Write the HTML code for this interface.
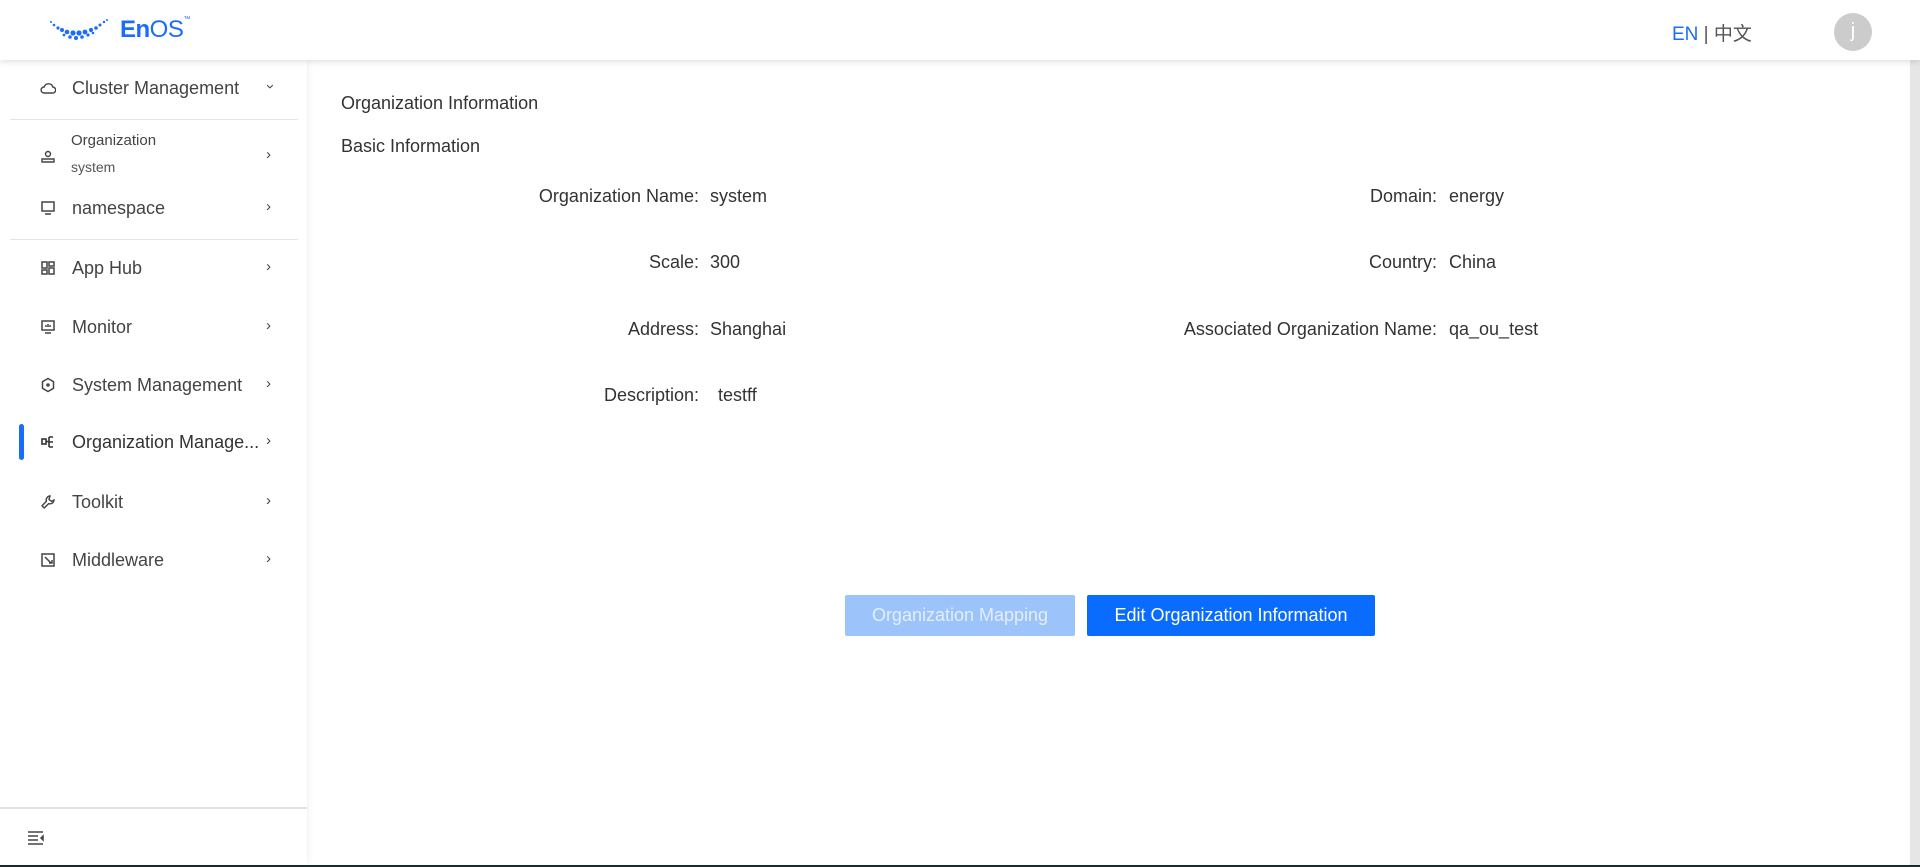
<!DOCTYPE html>
<html><head><meta charset="utf-8"><style>
*{margin:0;padding:0;box-sizing:border-box}
body{width:1920px;height:867px;overflow:hidden;background:#fff;font-family:"Liberation Sans","Noto Sans CJK SC",sans-serif;color:#333;position:relative}
.hdr{position:absolute;left:0;top:0;width:1920px;height:60px;background:#fff;box-shadow:0 2px 6px rgba(0,0,0,.12);z-index:3}
.side{position:absolute;left:0;top:60px;width:307px;height:805px;background:#fff;box-shadow:2px 0 6px rgba(0,0,0,.05);z-index:2}
.it{position:absolute;left:0;width:307px;height:40px;font-size:18px;color:#444}
.it .ic{position:absolute;left:40px;top:12px;width:16px;height:16px}
.it .tx{position:absolute;left:72px;top:10px}
.it .ch{position:absolute;left:266px;top:10px;font-size:15px;color:#444}
.div{position:absolute;left:10px;width:288px;height:1px;background:#e4e4e4}
.lbl{position:absolute;font-size:18px;line-height:24px;height:24px;color:#333;white-space:nowrap}
.c{font-family:"Liberation Sans",sans-serif;display:inline-block;width:10px}
.btn{position:absolute;top:595px;height:41px;border-radius:2px;color:#fff;font-size:18px;text-align:center;line-height:41px}
</style></head><body>
<div class="hdr">
<svg style="position:absolute;left:48px;top:18px" width="66" height="28" viewBox="0 0 66 28">
<g fill="#1a6dfa">
<circle cx="3" cy="4" r="1"/><circle cx="6" cy="7" r="1.3"/><circle cx="10" cy="10" r="1.6"/><circle cx="14" cy="12" r="2"/><circle cx="19" cy="14" r="2.3"/><circle cx="25" cy="15" r="2.6"/><circle cx="31" cy="15" r="2.6"/><circle cx="37" cy="14" r="2.4"/><circle cx="43" cy="12" r="2.1"/><circle cx="48" cy="10" r="1.8"/><circle cx="52" cy="7" r="1.5"/><circle cx="56" cy="4" r="1.2"/><circle cx="59" cy="2" r="1"/>
<circle cx="22" cy="19" r="1.8"/><circle cx="28" cy="20" r="2"/><circle cx="34" cy="19" r="1.8"/><circle cx="40" cy="17" r="1.6"/><circle cx="16" cy="17" r="1.4"/><circle cx="45" cy="15" r="1.3"/>
</g></svg>
<div style="position:absolute;left:120px;top:16px;font-size:24px;color:#1a6dfa;letter-spacing:-0.5px"><b>En</b>OS<span style="font-size:7px;vertical-align:top">™</span></div>
<div style="position:absolute;left:1672px;top:19px;font-size:19px;color:#555"><span style="color:#1a6dfa">EN</span> | 中文</div>
<div style="position:absolute;left:1834px;top:13px;width:38px;height:38px;border-radius:50%;background:#ccc;color:#fff;font-size:20px;text-align:center;line-height:36px">j</div>
</div>
<div class="side">
<div class="it" style="top:8px"><svg class="ic" viewBox="0 0 16 16" fill="none" stroke="#444" stroke-width="1.4"><path d="M4 13h8.5a3 3 0 0 0 .3-6 4.5 4.5 0 0 0-8.6 0A3 3 0 0 0 4 13z"/></svg><span class="tx">Cluster Management</span><span class="ch" style="transform:rotate(90deg);left:268px">›</span></div>
<div class="div" style="top:59px"></div>
<div class="it" style="top:72px;height:50px"><svg class="ic" style="top:17px" viewBox="0 0 16 16" fill="none" stroke="#444" stroke-width="1.4"><circle cx="8" cy="5" r="2.5"/><path d="M2 13h12v-3H2z"/></svg><span style="position:absolute;left:71px;top:0;font-size:15px">Organization</span><span style="position:absolute;left:71px;top:27px;font-size:14px;color:#555">system</span><span class="ch" style="top:14px">›</span></div>
<div class="it" style="top:128px"><svg class="ic" viewBox="0 0 16 16" fill="none" stroke="#444" stroke-width="1.5"><rect x="2" y="2" width="12" height="9"/><path d="M5 14h6"/></svg><span class="tx">namespace</span><span class="ch">›</span></div>
<div class="div" style="top:179px"></div>
<div class="it" style="top:188px"><svg class="ic" viewBox="0 0 16 16" fill="none" stroke="#444" stroke-width="1.5"><rect x="2" y="2" width="5" height="6"/><rect x="9" y="2" width="5" height="4"/><rect x="2" y="10" width="5" height="4"/><rect x="9" y="8" width="5" height="6"/></svg><span class="tx">App Hub</span><span class="ch">›</span></div>
<div class="it" style="top:247px"><svg class="ic" viewBox="0 0 16 16" fill="none" stroke="#444" stroke-width="1.5"><rect x="2" y="2" width="12" height="9"/><path d="M5 14h6M6 8V6M8 8V5M10 8V6"/></svg><span class="tx">Monitor</span><span class="ch">›</span></div>
<div class="it" style="top:305px"><svg class="ic" viewBox="0 0 16 16" fill="none" stroke="#444" stroke-width="1.5"><path d="M8 1.5l5.5 3.2v6.6L8 14.5l-5.5-3.2V4.7z"/><circle cx="8" cy="8" r="1" fill="#444"/></svg><span class="tx">System Management</span><span class="ch">›</span></div>
<div style="position:absolute;left:19px;top:364px;width:5px;height:36px;border-radius:3px;background:#1a6dfa"></div>
<div class="it" style="top:362px"><svg class="ic" viewBox="0 0 16 16" fill="none" stroke="#333" stroke-width="1.6"><rect x="2" y="5" width="4" height="5"/><path d="M6 7.5h3M9 3v10M9 3h4M9 8h4M9 13h4"/></svg><span class="tx" style="color:#333">Organization Manage...</span><span class="ch">›</span></div>
<div class="it" style="top:422px"><svg class="ic" viewBox="0 0 16 16" fill="none" stroke="#444" stroke-width="1.4"><path d="M10 2a4 4 0 0 0-3.6 5.3L2 11.8 4.2 14l4.5-4.4A4 4 0 0 0 14 6l-2.5 1.3L9 5.5 10 2z"/></svg><span class="tx">Toolkit</span><span class="ch">›</span></div>
<div class="it" style="top:480px"><svg class="ic" viewBox="0 0 16 16" fill="none" stroke="#444" stroke-width="1.5"><rect x="2" y="2" width="12" height="12"/><path d="M5 5l6 6M9 11h3v-3"/></svg><span class="tx">Middleware</span><span class="ch">›</span></div>
<div style="position:absolute;left:0;top:747px;width:307px;height:2px;background:#e2e2e6"></div>
<svg style="position:absolute;left:28px;top:771px" width="16" height="14" viewBox="0 0 16 14" stroke="#444" stroke-width="1.5"><path d="M0 1h15M0 5h10M0 9h10M0 13h15"/><path d="M15 5l-2 2 2 2z" fill="#444"/></svg>
</div>
<div style="position:absolute;left:1910px;top:60px;width:10px;height:805px;background:#e6e6e6"></div>
<div style="position:absolute;left:0;top:865px;width:1920px;height:2px;background:#1d2a2a"></div>
<div class="lbl" style="left:341px;top:91px">Organization Information</div>
<div class="lbl" style="left:341px;top:134px">Basic Information</div>
<div class="lbl" style="right:1216px;top:184px">Organization Name<span class="c">:</span></div><div class="lbl" style="left:710px;top:184px">system</div>
<div class="lbl" style="right:1216px;top:250px">Scale<span class="c">:</span></div><div class="lbl" style="left:710px;top:250px">300</div>
<div class="lbl" style="right:1216px;top:317px">Address<span class="c">:</span></div><div class="lbl" style="left:710px;top:317px">Shanghai</div>
<div class="lbl" style="right:1216px;top:383px">Description<span class="c">:</span></div><div class="lbl" style="left:718px;top:383px">testff</div>
<div class="lbl" style="right:478px;top:184px">Domain<span class="c">:</span></div><div class="lbl" style="left:1449px;top:184px">energy</div>
<div class="lbl" style="right:478px;top:250px">Country<span class="c">:</span></div><div class="lbl" style="left:1449px;top:250px">China</div>
<div class="lbl" style="right:478px;top:317px">Associated Organization Name<span class="c">:</span></div><div class="lbl" style="left:1449px;top:317px">qa_ou_test</div>
<div class="btn" style="left:845px;width:230px;background:#9cc4fb;color:#e3eeff">Organization Mapping</div>
<div class="btn" style="left:1087px;width:288px;background:#0a6cff">Edit Organization Information</div>
</body></html>
